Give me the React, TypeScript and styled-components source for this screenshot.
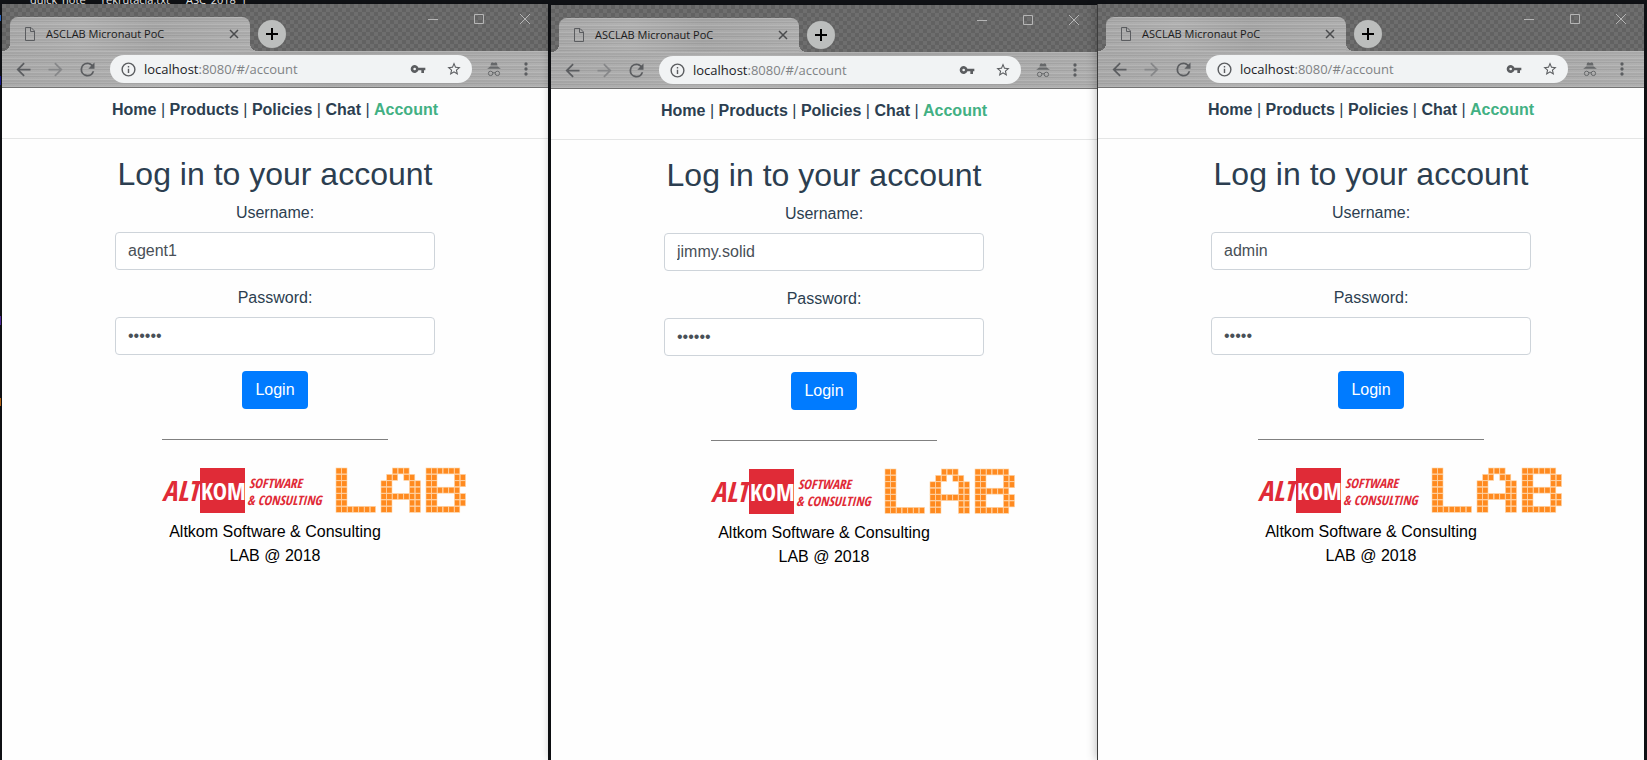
import React from "react";
import styled, { createGlobalStyle } from "styled-components";

const GlobalStyle = createGlobalStyle`
  *, *::before, *::after { box-sizing: border-box; }
  body { margin: 0; background: #111317; }
  button, input { font: inherit; }
`;

const uiFont = `"Open Sans", "Noto Sans", sans-serif`;
const pageFont = `"Liberation Sans", Arial, sans-serif`;
const brushedMetal = `
  repeating-linear-gradient(180deg, rgba(255,255,255,0.12) 0 1px, rgba(0,0,0,0.03) 1px 3px, rgba(255,255,255,0.05) 3px 4px, rgba(0,0,0,0.06) 4px 5px, rgba(255,255,255,0.02) 5px 7px),
  linear-gradient(90deg, #a9a9a9, #b0b0b0 30%, #a6a6a6 60%, #aeaeae)
`;

/* ---------- desktop ---------- */

const Desktop = styled.div`
  min-height: 100vh;
  display: flex;
  flex-direction: column;
  background:
    linear-gradient(#2f6fd0, #2f6fd0) 0 15px / 1px 6px no-repeat,
    linear-gradient(#1a1a9c, #1a1a9c) 0 76px / 1px 9px no-repeat,
    linear-gradient(#5a2fb0, #5a2fb0) 0 316px / 1px 9px no-repeat,
    linear-gradient(#c9701a, #c9701a) 0 398px / 1px 8px no-repeat,
    #111317;
`;

const DesktopLabels = styled.div`
  height: 4px;
  overflow: hidden;
  display: flex;
  align-items: flex-end;
  gap: 16px;
  padding-left: 30px;
  font: 11px/8px ${uiFont};
  color: #fff;
  white-space: nowrap;
`;

const Windows = styled.div`
  flex: 1;
  display: flex;
  padding: 0 3px 0 2px;
`;

/* ---------- browser window ---------- */

type Place = "left" | "middle" | "right";

const Frame = styled.section<{ $place: Place }>`
  flex: 1 1 0;
  min-width: 0;
  display: flex;
  flex-direction: column;
  background: #fefefe;
  box-shadow: 0 0 10px rgba(0, 0, 0, 0.3);
  ${(p) => p.$place === "left" && "margin-right: 3px;"}
  ${(p) => p.$place === "middle" && "margin-top: 1px;"}
  ${(p) => p.$place === "right" && "border-left: 1px solid #3c3c3c;"}
`;

const TitleBar = styled.header`
  height: 47px;
  display: flex;
  align-items: flex-end;
  padding-left: 8px;
  background: repeating-conic-gradient(#626262 0 25%, #6e6e6e 0 50%) 0 0 / 8px 8px;
`;

const Tab = styled.div`
  position: relative;
  width: 240px;
  height: 34px;
  display: flex;
  align-items: center;
  padding: 0 8px 0 14px;
  border-radius: 8px 8px 0 0;
  background: ${brushedMetal};
  color: #1b1b1b;
  font: 11px/16px ${uiFont};

  &::before, &::after {
    content: "";
    position: absolute;
    bottom: 0;
    width: 8px;
    height: 8px;
  }
  &::before {
    right: 100%;
    background: radial-gradient(circle at 0 0, transparent 8px, #a9a9a9 8px);
  }
  &::after {
    left: 100%;
    background: radial-gradient(circle at 100% 0, transparent 8px, #a9a9a9 8px);
  }
`;

const TabTitle = styled.span`
  flex: 1;
  padding-left: 10px;
`;

const IconButton = styled.button<{ $w: number; $color?: string }>`
  width: ${(p) => p.$w}px;
  height: 28px;
  padding: 0;
  border: 0;
  background: none;
  display: flex;
  align-items: center;
  justify-content: center;
  color: ${(p) => p.$color ?? "#5b5d60"};
  svg { display: block; }
`;

const NewTab = styled(IconButton)`
  margin: 0 0 3px 8px;
  border-radius: 50%;
  background: #bcbebd;
`;

const WindowControls = styled.div`
  display: flex;
  align-self: flex-start;
  margin: 1px 0 0 auto;
`;

const Toolbar = styled.div`
  height: 37px;
  display: flex;
  align-items: center;
  padding: 0 6px 0 5px;
  border-bottom: 1px solid #747474;
  background: ${brushedMetal};
`;

const Omnibox = styled.div`
  flex: 1;
  min-width: 0;
  height: 28px;
  margin: 0 6px 0 7px;
  padding-left: 10px;
  display: flex;
  align-items: center;
  border-radius: 14px;
  background: #f1f3f4;
  color: #5b5d60;
`;

const Address = styled.span`
  flex: 1;
  padding-left: 7px;
  font: 13px/20px ${uiFont};
  color: #7f8284;
  b { font-weight: 400; color: #202124; }
`;

/* ---------- login page ---------- */

const Page = styled.main`
  font: 16px/24px ${pageFont};
  color: #2c3e50;
  text-align: center;
  display: flex;
  flex-direction: column;
  align-items: center;
`;

const Nav = styled.nav`
  width: 100%;
  padding: 10px 0 16px;
  border-bottom: 1px solid #e4e5e5;
`;

const NavLink = styled.a<{ $active?: boolean }>`
  font-weight: 700;
  text-decoration: none;
  color: ${(p) => (p.$active ? "#42b083" : "#2c3e50")};
`;

const Form = styled.form`
  width: 100%;
  max-width: 320px;
  margin-top: 16px;
  display: flex;
  flex-direction: column;
  align-items: center;
`;

const Heading = styled.h2`
  margin: 0 0 8px;
  font-size: 32px;
  font-weight: 400;
  line-height: 38px;
  white-space: nowrap;
`;

const Field = styled.div`
  width: 100%;
  margin-bottom: 16px;
  label { display: block; line-height: 23px; margin-bottom: 8px; }
`;

const TextBox = styled.input`
  display: block;
  width: 100%;
  height: 38px;
  padding: 6px 12px;
  border: 1px solid #ced4da;
  border-radius: 4px;
  background: #fff;
  color: #495057;
  line-height: 24px;
`;

const LoginButton = styled.button`
  height: 38px;
  padding: 0 13px;
  border: 0;
  border-radius: 4px;
  background: #007bff;
  color: #fff;
`;

const Footer = styled.footer`
  width: 226px;
  margin-top: 30px;
  padding-top: 24px;
  border-top: 1px solid #808080;
  color: #000;
  svg { display: block; margin-bottom: 4px; overflow: visible; }
`;

/* ---------- drawings ---------- */

const Glyph = ({ d, size }: { d: string; size: number }) => (
  <svg width={size} height={size} viewBox="0 0 24 24" fill="currentColor" aria-hidden="true">
    <path d={d} />
  </svg>
);

const paths = {
  back: "M20 11H7.83l5.59-5.59L12 4l-8 8 8 8 1.41-1.41L7.83 13H20v-2z",
  forward: "M12 4l-1.41 1.41L16.17 11H4v2h12.17l-5.58 5.59L12 20l8-8z",
  reload:
    "M17.65 6.35A7.96 7.96 0 0 0 12 4a8 8 0 1 0 7.73 10h-2.08A6 6 0 1 1 12 6c1.66 0 3.14.69 4.22 1.78L13 11h7V4l-2.35 2.35z",
  info: "M11 17h2v-6h-2v6zm1-15a10 10 0 1 0 0 20 10 10 0 0 0 0-20zm0 18a8 8 0 1 1 0-16 8 8 0 0 1 0 16zM11 9h2V7h-2v2z",
  key: "M12.65 10a6 6 0 1 0 0 4H17v4h4v-4h2v-4H12.65zM7 14a2 2 0 1 1 0-4 2 2 0 0 1 0 4z",
  star:
    "M22 9.24l-7.19-.62L12 2 9.19 8.63 2 9.24l5.46 4.73L5.82 21 12 17.27 18.18 21l-1.63-7.03L22 9.24zM12 15.4l-3.76 2.27 1-4.28-3.32-2.88 4.38-.38L12 6.1l1.71 4.04 4.38.38-3.32 2.88 1 4.28L12 15.4z",
  more: "M12 8a2 2 0 1 0 0-4 2 2 0 0 0 0 4zm0 2a2 2 0 1 0 0 4 2 2 0 0 0 0-4zm0 6a2 2 0 1 0 0 4 2 2 0 0 0 0-4z",
};

const Stroke = ({ d, size, width = 1 }: { d: string; size: number; width?: number }) => (
  <svg width={size} height={size} viewBox={`0 0 ${size} ${size}`} fill="none" stroke="currentColor" strokeWidth={width} aria-hidden="true">
    <path d={d} />
  </svg>
);

const PageIcon = () => (
  <svg width="12" height="14" viewBox="0 0 12 14" fill="none" stroke="#5b5d60" aria-hidden="true">
    <path d="M1.5.5h5.5l3.5 3.5v9.5h-9zM6.5.5v4h4" />
  </svg>
);

const Incognito = () => (
  <svg width="14" height="15" viewBox="0 0 14 15" fill="none" stroke="#66686a" role="img" aria-label="Incognito">
    <path d="M4 1.2l1-.9 2 .6 2-.6 1 .9.5 2.3h-7z M3.2 4.4h7.6l3 2.3H.2z" fill="#66686a" stroke="none" />
    <circle cx="3.6" cy="11.4" r="2.2" />
    <circle cx="10.4" cy="11.4" r="2.2" />
    <path d="M5.8 11q1.2-.8 2.4 0" />
  </svg>
);

const letters = [
  { x: 174, rows: ["11", "11", "11", "11", "11", "11", "1111111"] },
  { x: 219, rows: ["0011100", "0110110", "1100011", "1100011", "1111111", "1100011", "1100011"] },
  { x: 264, rows: ["111111", "1100011", "1100011", "111111", "1100011", "1100011", "111111"] },
];

const Logo = () => (
  <svg width="306" height="52" viewBox="0 0 306 52" role="img" aria-label="Altkom Software & Consulting LAB">
    <g fontFamily='"Open Sans Condensed", "Roboto Condensed", sans-serif' fontWeight="700" fill="#e02b37">
      <text x="0" y="37" fontSize="28" fontStyle="italic">ALT</text>
      <rect x="38" y="4" width="45" height="45" />
      <text x="39" y="36" fontSize="24" fill="#fff">KOM</text>
      <text x="87" y="24" fontSize="13" fontStyle="italic">SOFTWARE</text>
      <text x="85" y="41" fontSize="13" fontStyle="italic">&amp; CONSULTING</text>
    </g>
    <g fill="#ff8a1f" stroke="#ffd3a4" strokeWidth=".6">
      {letters.map(({ x, rows }) =>
        rows.flatMap((row, r) =>
          [...row].map((on, c) =>
            on === "1" ? <rect key={`${x}-${r}-${c}`} x={x + c * 5.7} y={4 + r * 6.4} width="5.3" height="5.9" /> : null
          )
        )
      )}
    </g>
  </svg>
);

/* ---------- composition ---------- */

interface Session {
  place: Place;
  user: string;
  secret: string;
}

const links = ["Home", "Products", "Policies", "Chat", "Account"];

const LoginPage = ({ place, user, secret }: Session) => (
  <Page>
    <Nav>
      {links.map((name, i) => (
        <React.Fragment key={name}>
          {i > 0 && " | "}
          <NavLink href={`#/${name.toLowerCase()}`} $active={name === "Account"}>{name}</NavLink>
        </React.Fragment>
      ))}
    </Nav>
    <Form onSubmit={(e) => e.preventDefault()}>
      <Heading>Log in to your account</Heading>
      <Field>
        <label htmlFor={`user-${place}`}>Username:</label>
        <TextBox id={`user-${place}`} type="text" defaultValue={user} />
      </Field>
      <Field>
        <label htmlFor={`password-${place}`}>Password:</label>
        <TextBox id={`password-${place}`} type="password" defaultValue={secret} />
      </Field>
      <LoginButton type="submit">Login</LoginButton>
    </Form>
    <Footer>
      <Logo />
      Altkom Software &amp; Consulting
      <br />
      LAB @ 2018
    </Footer>
  </Page>
);

const BrowserWindow = (session: Session) => (
  <Frame $place={session.place}>
    <TitleBar>
      <Tab>
        <PageIcon />
        <TabTitle>ASCLAB Micronaut PoC</TabTitle>
        <IconButton $w={16} $color="#4a4b4d" aria-label="Close tab"><Stroke size={10} width={1.5} d="M1 1l8 8M9 1l-8 8" /></IconButton>
      </Tab>
      <NewTab $w={28} $color="#000" aria-label="New tab"><Stroke size={12} width={2} d="M6 0v12M0 6h12" /></NewTab>
      <WindowControls>
        <IconButton $w={46} $color="#b5b5b5" aria-label="Minimize"><Stroke size={11} d="M0 5.5h10" /></IconButton>
        <IconButton $w={46} $color="#b5b5b5" aria-label="Maximize"><Stroke size={10} d="M.5.5h9v9h-9z" /></IconButton>
        <IconButton $w={46} $color="#b5b5b5" aria-label="Close"><Stroke size={10} d="M0 0l10 10M10 0L0 10" /></IconButton>
      </WindowControls>
    </TitleBar>
    <Toolbar>
      <IconButton $w={32} aria-label="Back"><Glyph size={21} d={paths.back} /></IconButton>
      <IconButton $w={32} $color="#868789" aria-label="Forward"><Glyph size={21} d={paths.forward} /></IconButton>
      <IconButton $w={32} aria-label="Reload"><Glyph size={21} d={paths.reload} /></IconButton>
      <Omnibox>
        <Glyph size={17} d={paths.info} />
        <Address><b>localhost</b>:8080/#/account</Address>
        <IconButton $w={36} aria-label="Saved passwords"><Glyph size={16} d={paths.key} /></IconButton>
        <IconButton $w={36} aria-label="Bookmark"><Glyph size={16} d={paths.star} /></IconButton>
      </Omnibox>
      <IconButton $w={32} as="span"><Incognito /></IconButton>
      <IconButton $w={32} aria-label="Menu"><Glyph size={20} d={paths.more} /></IconButton>
    </Toolbar>
    <LoginPage {...session} />
  </Frame>
);

export default function App() {
  return (
    <>
      <GlobalStyle />
      <Desktop>
        <DesktopLabels>
          <span>quick_note</span>
          <span>rekrutacja.txt</span>
          <span>ASC_2018_1</span>
        </DesktopLabels>
        <Windows>
          <BrowserWindow place="left" user="agent1" secret="agent1" />
          <BrowserWindow place="middle" user="jimmy.solid" secret="secret" />
          <BrowserWindow place="right" user="admin" secret="admin" />
        </Windows>
      </Desktop>
    </>
  );
}
